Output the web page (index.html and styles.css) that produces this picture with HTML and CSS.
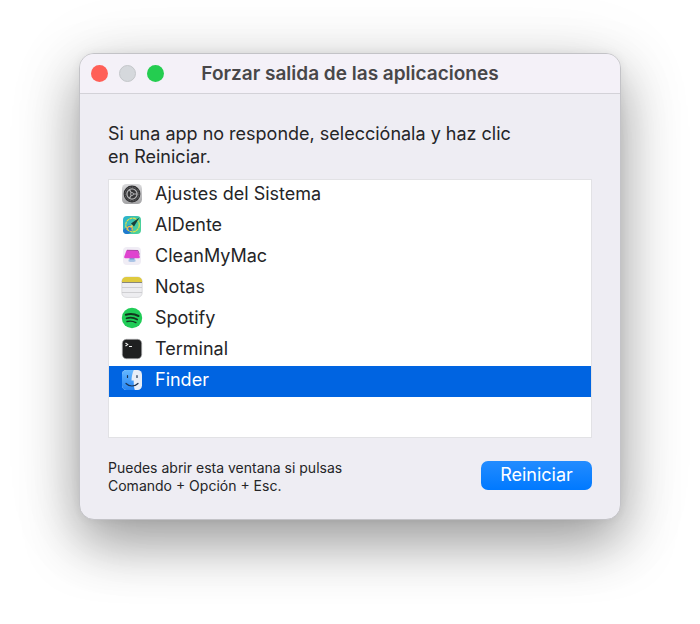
FILE: index.html
```html
<!DOCTYPE html>
<html lang="es">
<head>
<meta charset="utf-8">
<meta name="viewport" content="width=device-width, initial-scale=1">
<title>Forzar salida de las aplicaciones</title>
<link rel="stylesheet" href="styles.css">
</head>
<body>
<main class="window">
  <header class="titlebar">
    <div class="controls">
      <button class="control close" type="button" aria-label="Cerrar"></button>
      <button class="control minimize" type="button" aria-label="Minimizar" disabled></button>
      <button class="control zoom" type="button" aria-label="Ampliar"></button>
    </div>
    <h1 class="title">Forzar salida de las aplicaciones</h1>
  </header>
  <div class="content">
    <p class="message">Si una app no responde, selecciónala y haz clic en Reiniciar.</p>
    <ul class="apps">
      <li><button class="app" type="button">
        <svg class="icon" viewBox="0 0 22 22" aria-hidden="true">
          <defs><linearGradient id="metal" x2="0" y2="1"><stop stop-color="#dadadc"/><stop offset="1" stop-color="#a4a4a6"/></linearGradient></defs>
          <rect x="1" y="1" width="20" height="20" rx="4.5" fill="url(#metal)"/>
          <circle cx="11" cy="11" r="8.4" fill="#2d2d2f"/>
          <circle cx="11" cy="11" r="6.9" fill="none" stroke="#8d8d8f" stroke-width=".8" stroke-dasharray="1 .7"/>
          <circle cx="11" cy="11" r="5.1" fill="#353537" stroke="#b4b4b6" stroke-width="1.3"/>
          <path d="M11 11h5M11 11l-2.6-4.4M11 11l-2.6 4.4" stroke="#b4b4b6" stroke-width="1.2"/>
          <circle cx="11" cy="11" r="1.5" fill="#3c3c3e" stroke="#bdbdbf" stroke-width=".8"/>
        </svg>
        <span>Ajustes del Sistema</span></button></li>
      <li><button class="app" type="button">
        <svg class="icon" viewBox="0 0 22 22" aria-hidden="true">
          <defs><linearGradient id="sea" x2="1" y2=".4"><stop stop-color="#28afd0"/><stop offset="1" stop-color="#4bd09b"/></linearGradient></defs>
          <rect x="2" y="2" width="18" height="18" rx="4" fill="url(#sea)"/>
          <path d="M2 16c3-2 4-5 7-5l3 3c0 3-2 5-5 6H6a4 4 0 0 1-4-4z" fill="#2179ce"/>
          <circle cx="11.500" cy="11" r="6.800" fill="none" stroke="#dfe04a" stroke-width="1.200" stroke-dasharray="3 .6"/>
          <path d="M6.500 16c-.5-3 1-4 3-3.500 2 .5 2 2 1.500 4" fill="none" stroke="#e8b94a" stroke-width="1.400"/>
          <path d="M18.500 3.500 10 9.500l3 3z" fill="#193f38"/>
          <path d="m11 10.500-2 3 3-1z" fill="#efd658"/>
        </svg>
        <span>AlDente</span></button></li>
      <li><button class="app" type="button">
        <svg class="icon" viewBox="0 0 22 22" aria-hidden="true">
          <rect x="2" y="2" width="18" height="18" rx="4" fill="#f0edf5"/>
          <path d="M8.500 13h5v3.500h-5z" fill="#779fd2"/>
          <path d="M7.500 14.500h7v2h-7z" fill="#a8c5e6"/>
          <path d="M5.500 5.300h11l2.300 6.500q.2 1.400-1.200 1.400H4.400Q3 13.200 3.200 11.800z" fill="#df43cf"/>
          <path d="m6 5.300 11 .2 1.300 4" fill="none" stroke="#ae42a6" stroke-width="1"/>
        </svg>
        <span>CleanMyMac</span></button></li>
      <li><button class="app" type="button">
        <svg class="icon" viewBox="0 0 22 22" aria-hidden="true">
          <rect x=".8" y="1" width="20.400" height="20.400" rx="4.500" fill="#ededf0" stroke="#cbcbcf" stroke-width=".6"/>
          <path d="M.8 6V5.500A4.500 4.500 0 0 1 5.300 1h11.400a4.500 4.500 0 0 1 4.500 4.500V6z" fill="#dfca3e"/>
          <path d="M1 6.500h20" stroke="#88877c" stroke-width="1"/>
          <path d="M1 11.500h20M1 16.500h20" stroke="#c6c6ca" stroke-width=".8"/>
        </svg>
        <span>Notas</span></button></li>
      <li><button class="app" type="button">
        <svg class="icon" viewBox="0 0 22 22" aria-hidden="true">
          <circle cx="11" cy="11" r="10.200" fill="#20cc57"/>
          <g fill="none" stroke="#12351f" stroke-linecap="round">
            <path d="M4.800 7.800c4.500-1.300 9-.8 12.700 1.200" stroke-width="2"/>
            <path d="M5.500 11.300c4-1.100 7.500-.6 10.700 1.200" stroke-width="1.700"/>
            <path d="M6 14.500c3.300-.8 6.200-.4 8.900 1.100" stroke-width="1.400"/>
          </g>
        </svg>
        <span>Spotify</span></button></li>
      <li><button class="app" type="button">
        <svg class="icon" viewBox="0 0 22 22" aria-hidden="true">
          <rect x="1.300" y="1.300" width="19.400" height="19.400" rx="4.200" fill="#1f2021" stroke="#a9a9ab" stroke-width=".7"/>
          <path d="m4.500 5 2.200 1.500L4.500 8M8 8.500h3" fill="none" stroke="#f4f4f4" stroke-width="1.100"/>
        </svg>
        <span>Terminal</span></button></li>
      <li><button class="app selected" type="button" aria-pressed="true">
        <svg class="icon" viewBox="0 0 22 22" aria-hidden="true">
          <defs><linearGradient id="face" x2="0" y2="1"><stop stop-color="#65b8ff"/><stop offset="1" stop-color="#2584f3"/></linearGradient></defs>
          <rect x="1" y="1" width="20" height="20" rx="4.500" fill="#e8eef6"/>
          <path d="M5.500 1h7.300c-1.400 3-2.200 6.500-2.300 10.500h2.200c0 4 .3 7 1.100 9.500H5.500A4.500 4.500 0 0 1 1 16.500v-11A4.500 4.500 0 0 1 5.500 1z" fill="url(#face)"/>
          <path d="M6.500 6.500v2M16 6.500v2M5 14.500c3.300 3.300 8.700 3.300 12 0" fill="none" stroke="#1d334f" stroke-width="1.200" stroke-linecap="round"/>
        </svg>
        <span>Finder</span></button></li>
    </ul>
    <footer class="footer">
      <p class="hint">Puedes abrir esta ventana si pulsas Comando + Opción + Esc.</p>
      <button class="restart" type="button">Reiniciar</button>
    </footer>
  </div>
</main>
</body>
</html>
```
FILE: styles.css
```css
* {
  box-sizing: border-box;
}

html {
  background: #fff;
}

body {
  min-height: 100vh;
  margin: 0;
  padding: 53px 79px;
  color: #252527;
  font-family: Inter, "Liberation Sans", sans-serif;
  font-size: 18px;
}

button {
  margin: 0;
  border: 0;
  font: inherit;
}

.window {
  border: 1px solid #c3c3c7;
  border-radius: 15px;
  background: #eeedf3;
  box-shadow: 0 24px 54px rgba(0, 0, 0, .34), 0 10px 80px rgba(0, 0, 0, .1), 0 0 10px rgba(0, 0, 0, .06);
}

.titlebar {
  display: grid;
  grid-template-columns: 1fr auto 1fr;
  align-items: center;
  height: 40px;
  padding: 0 11px;
  border-bottom: 1px solid #d3d2d8;
  border-radius: 14px 14px 0 0;
  background: #f4f1f8;
}

.controls {
  display: flex;
  gap: 11px;
}

.control {
  width: 17px;
  height: 17px;
  padding: 0;
  border-radius: 50%;
}

.close {
  background: #ff5f57;
}

.minimize {
  border: 1px solid #c4c7ca;
  background: #d5d8dc;
}

.zoom {
  background: #24cd50;
}

.title {
  margin: 0;
  color: #484749;
  font-size: 19px;
  font-weight: 600;
  line-height: 22px;
}

.content {
  padding: 28px 28px 24px;
}

.message {
  max-width: 420px;
  margin: 0 0 11px;
  line-height: 23px;
}

.apps {
  min-height: 259px;
  margin: 0;
  padding: 0;
  border: 1px solid #e2e2e5;
  background: #fff;
  list-style: none;
}

.app {
  display: flex;
  align-items: center;
  gap: 12px;
  width: 100%;
  height: 31px;
  padding: 0 12px 3px;
  background: transparent;
  color: inherit;
  line-height: 28px;
  text-align: left;
}

.selected {
  background: #0064e1;
  color: #fff;
}

.icon {
  flex: none;
  width: 22px;
  height: 22px;
}

.footer {
  display: flex;
  align-items: flex-start;
  justify-content: space-between;
  margin-top: 21px;
}

.hint {
  max-width: 260px;
  margin: 0;
  font-size: 14px;
  line-height: 18px;
}

.restart {
  width: 111px;
  height: 29px;
  margin-top: 2px;
  padding: 0 0 2px;
  border-radius: 7px;
  background: linear-gradient(#238cff, #0079ff);
  color: #fff;
}
```
